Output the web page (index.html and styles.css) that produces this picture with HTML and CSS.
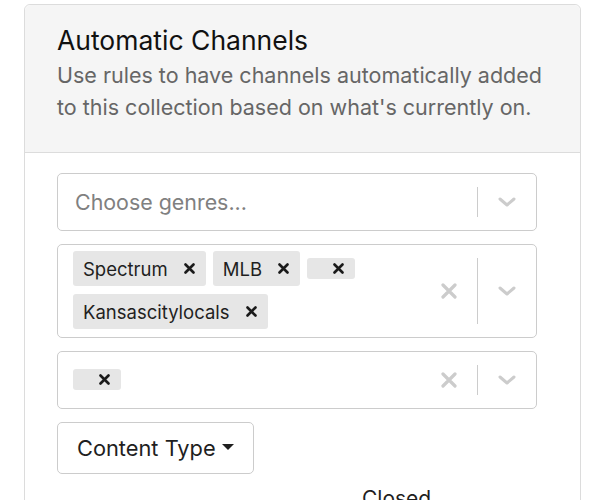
FILE: index.html
```html
<!DOCTYPE html>
<html>
<head>
<meta charset="utf-8">
<link rel="stylesheet" href="styles.css">
</head>
<body>
<div class="card">
  <div class="card-header">
    <h2 class="title">Automatic Channels</h2>
    <p class="subtitle">Use rules to have channels automatically added to this collection based on what's currently on.</p>
  </div>
  <div class="card-body">
    <div class="select">
      <div class="value-area">
        <span class="placeholder">Choose genres...</span>
      </div>
      <div class="indicators">
        <span class="sep"></span>
        <span class="chev"><svg width="18" height="10" viewBox="0 0 18 10"><path d="M2 2 L9 8 L16 2" fill="none" stroke="#cccccc" stroke-width="3" stroke-linecap="round" stroke-linejoin="round"/></svg></span>
      </div>
    </div>

    <div class="select">
      <div class="value-area tags">
        <span class="tag"><span class="tag-label">Spectrum</span><span class="tag-x"><svg width="11" height="11" viewBox="0 0 11 11"><path d="M1.5 1.5 L9.5 9.5 M9.5 1.5 L1.5 9.5" stroke="#1a1a1a" stroke-width="2.6" stroke-linecap="round"/></svg></span></span>
        <span class="tag"><span class="tag-label">MLB</span><span class="tag-x"><svg width="11" height="11" viewBox="0 0 11 11"><path d="M1.5 1.5 L9.5 9.5 M9.5 1.5 L1.5 9.5" stroke="#1a1a1a" stroke-width="2.6" stroke-linecap="round"/></svg></span></span>
        <span class="tag empty"><span class="tag-label"></span><span class="tag-x"><svg width="11" height="11" viewBox="0 0 11 11"><path d="M1.5 1.5 L9.5 9.5 M9.5 1.5 L1.5 9.5" stroke="#1a1a1a" stroke-width="2.6" stroke-linecap="round"/></svg></span></span>
        <span class="tag"><span class="tag-label">Kansascitylocals</span><span class="tag-x"><svg width="11" height="11" viewBox="0 0 11 11"><path d="M1.5 1.5 L9.5 9.5 M9.5 1.5 L1.5 9.5" stroke="#1a1a1a" stroke-width="2.6" stroke-linecap="round"/></svg></span></span>
      </div>
      <div class="indicators">
        <span class="clear"><svg width="16" height="16" viewBox="0 0 16 16"><path d="M2 2 L14 14 M14 2 L2 14" stroke="#cccccc" stroke-width="3.2" stroke-linecap="round"/></svg></span>
        <span class="sep"></span>
        <span class="chev"><svg width="18" height="10" viewBox="0 0 18 10"><path d="M2 2 L9 8 L16 2" fill="none" stroke="#cccccc" stroke-width="3" stroke-linecap="round" stroke-linejoin="round"/></svg></span>
      </div>
    </div>

    <div class="select">
      <div class="value-area tags">
        <span class="tag empty"><span class="tag-label"></span><span class="tag-x"><svg width="11" height="11" viewBox="0 0 11 11"><path d="M1.5 1.5 L9.5 9.5 M9.5 1.5 L1.5 9.5" stroke="#1a1a1a" stroke-width="2.6" stroke-linecap="round"/></svg></span></span>
      </div>
      <div class="indicators">
        <span class="clear"><svg width="16" height="16" viewBox="0 0 16 16"><path d="M2 2 L14 14 M14 2 L2 14" stroke="#cccccc" stroke-width="3.2" stroke-linecap="round"/></svg></span>
        <span class="sep"></span>
        <span class="chev"><svg width="18" height="10" viewBox="0 0 18 10"><path d="M2 2 L9 8 L16 2" fill="none" stroke="#cccccc" stroke-width="3" stroke-linecap="round" stroke-linejoin="round"/></svg></span>
      </div>
    </div>

    <button class="dropdown-btn">Content Type <span class="caret"></span></button>

    <div class="closed-row"><span class="closed">Closed</span></div>
  </div>
</div>
</body>
</html>
```
FILE: styles.css
```css
* { box-sizing: border-box; }
html, body { margin: 0; padding: 0; background: #ffffff; }
body {
  font-family: Inter, "Noto Sans", "Liberation Sans", sans-serif;
  color: #1a1a1a;
  overflow: hidden;
  height: 500px;
}
.card {
  margin: 4px 0 0 24px;
  width: 557px;
  border: 1px solid #dcdcdc;
  border-radius: 6px;
  min-height: 600px;
}
.card-header {
  background: #f5f5f5;
  border-bottom: 1px solid #dcdcdc;
  border-radius: 6px 6px 0 0;
  padding: 19px 20px 0 32px;
  height: 148px;
}
.title {
  margin: 0;
  font-size: 26.5px;
  font-weight: 400;
  line-height: 32px;
  color: #111111;
}
.subtitle {
  margin: 3px 0 0 0;
  font-size: 21.5px;
  line-height: 32px;
  color: #666666;
}
.card-body {
  padding: 20px 43px 0 32px;
  display: flex;
  flex-direction: column;
  align-items: flex-start;
}
.select {
  width: 480px;
  min-height: 58px;
  border: 1px solid #cccccc;
  border-radius: 5px;
  display: flex;
  align-items: center;
  margin-bottom: 13px;
  background: #fff;
}
.value-area {
  flex: 1;
  padding: 0 15px;
  display: flex;
  align-items: center;
}
.placeholder {
  font-size: 21.4px;
  color: #808080;
  margin-left: 2px;
}
.tags {
  flex-wrap: wrap;
  gap: 8px 7px;
  padding: 6px 15px 8px;
}
.tag {
  display: inline-flex;
  align-items: center;
  background: #e6e6e6;
  border-radius: 3px;
  height: 35px;
}
.tag.empty { height: 21px; }
.tag-label {
  font-size: 18.5px;
  color: #1f1f1f;
  padding: 0 0 0 10px;
}
.tag-x {
  display: inline-flex;
  align-items: center;
  justify-content: center;
  padding: 0 11px 0 16px;
  height: 100%;
}
.indicators {
  display: flex;
  align-items: center;
  align-self: stretch;
  padding: 13px 0;
}
.clear {
  display: inline-flex;
  width: 30px;
  justify-content: center;
  margin-right: 13px;
}
.sep {
  width: 1px;
  background: #cccccc;
  align-self: stretch;
}
.chev {
  display: inline-flex;
  justify-content: center;
  width: 58px;
}
.dropdown-btn {
  font-family: inherit;
  font-size: 21.8px;
  color: #1f1f1f;
  background: #fff;
  border: 1px solid #cccccc;
  border-radius: 5px;
  height: 52px;
  padding: 0 19px 0 19px;
  display: inline-flex;
  align-items: center;
}
.caret {
  display: inline-block;
  width: 0;
  height: 0;
  border-left: 6px solid transparent;
  border-right: 6px solid transparent;
  border-top: 6px solid #1f1f1f;
  margin-left: 6px;
  margin-bottom: 3px;
}
.closed-row {
  width: 480px;
  padding-left: 305px;
  margin-top: 12px;
}
.closed {
  font-size: 21px;
  color: #1f1f1f;
}
```
